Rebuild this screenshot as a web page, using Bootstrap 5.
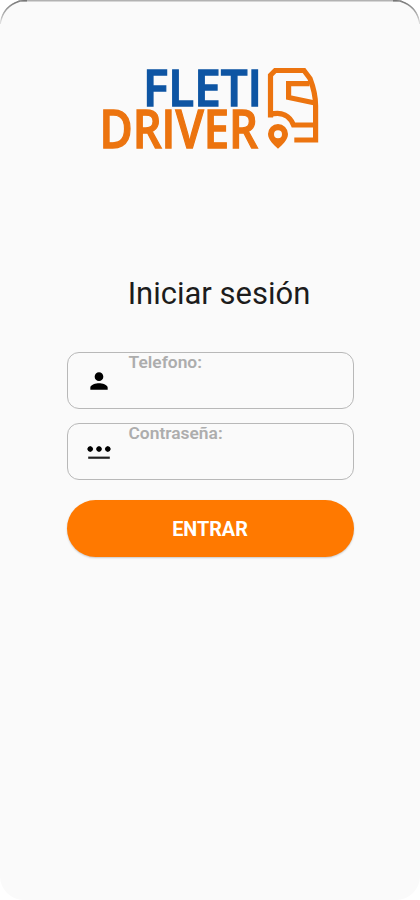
<!DOCTYPE html>
<html lang="es">
<head>
<meta charset="utf-8">
<meta name="viewport" content="width=device-width, initial-scale=1">
<title>Fleti Driver</title>
<link href="https://cdn.jsdelivr.net/npm/bootstrap@5.3.0/dist/css/bootstrap.min.css" rel="stylesheet">
<style>
body{background:#fff;font-family:Roboto,"Liberation Sans",sans-serif}
.screen{height:900px;background:#fafafa;border-radius:24px;overflow:hidden;padding-top:62px}
.edge{top:0;left:0}
.brand{font-family:"Open Sans",sans-serif;font-weight:600;overflow:visible}
.title{font-size:31px;line-height:40px;font-weight:400;color:#1c1c1c;margin:120px 0 38px;padding-left:18px}
.login-form{width:287px}
.field{height:57px;border:1.5px solid #b8b8b8;border-radius:12px;margin-bottom:14px}
.field-icon{width:61px;padding-left:2px}
.field-label{font-size:17.4px;line-height:18px;font-weight:600;color:#adadad}
.btn-enter{height:57px;margin-top:6px;padding-top:8px;background:#ff7900;color:#fff;font-size:19.8px;font-weight:700;box-shadow:0 1px 2px #0003}
.btn-enter:hover{background:#f07000;color:#fff}
</style>
<script src="https://cdn.jsdelivr.net/npm/bootstrap@5.3.0/dist/js/bootstrap.bundle.min.js"></script>
</head>
<body>
<main class="screen position-relative d-flex flex-column align-items-center">
  <svg class="edge position-absolute" width="420" height="30" aria-hidden="true">
    <defs><linearGradient id="rim" x1="0" x2="0" y1="0" y2="1"><stop stop-color="#777"/><stop offset="1" stop-color="#ddd"/></linearGradient></defs>
    <path d="M0 24Q3 6 20 1M400 1Q417 6 420 24" fill="none" stroke="url(#rim)" stroke-width="1.5"/>
    <path d="M18 .75H402" stroke="#b2b2b2" stroke-width="1.5"/>
    <path d="M18 .75H27M393 .75H402" stroke="#777" stroke-width="1.5"/>
  </svg>
  <svg class="brand flex-shrink-0" width="220" height="92" viewBox="100 62 220 92" role="img" aria-label="Fleti Driver">
    <text x="143" y="105.8" font-size="50.8" fill="#0e55a3" stroke="#0e55a3" stroke-width="1.3" textLength="119" lengthAdjust="spacingAndGlyphs">FLETI</text>
    <text x="99.4" y="147.7" font-size="51.8" fill="#ec740f" stroke="#ec740f" stroke-width="1.3" textLength="158.6" lengthAdjust="spacingAndGlyphs">DRIVER</text>
    <g fill="none" stroke="#ec740f" stroke-width="5.2">
      <path d="M270.5 117.5V75.3L275.2 70.5H304L310 78.5Q315.6 93 315.6 106V140H294.3"/>
      <path d="M309.5 83.7H288.6V97.5L315 103"/>
      <path d="M270 114.5C282 111 290 116 293.5 125H315.5"/>
    </g>
    <path fill="#ec740f" fill-rule="evenodd" d="M278 124a10 10 0 0 1 10 10c0 6-6 11-10 14.8C274 145 268 140 268 134a10 10 0 0 1 10-10Zm0 6.2a4 4 0 1 0 0 8 4 4 0 0 0 0-8Z"/>
  </svg>
  <h1 class="title">Iniciar sesión</h1>
  <form class="login-form">
    <div class="field d-flex">
      <span class="field-icon d-flex align-items-center justify-content-center">
        <svg width="26" height="26" viewBox="0 0 24 24"><path d="M12 12a4 4 0 1 0 0-8 4 4 0 0 0 0 8Zm0 2c-2.7 0-8 1.3-8 4v2h16v-2c0-2.7-5.3-4-8-4Z"/></svg>
      </span>
      <span class="field-label">Telefono:</span>
    </div>
    <div class="field d-flex">
      <span class="field-icon d-flex align-items-center justify-content-center">
        <svg width="26" height="26" viewBox="0 0 26 26"><path d="M4.2 7l2 1 1 2-1 2-2 1-2-1-1-2 1-2ZM13 7l2 1 1 2-1 2-2 1-2-1-1-2 1-2ZM21.8 7l2 1 1 2-1 2-2 1-2-1-1-2 1-2Z"/><path d="M2.2 17.6h21.6v2.2H2.2z" fill="#222"/></svg>
      </span>
      <span class="field-label">Contraseña:</span>
    </div>
    <button type="button" class="btn btn-enter rounded-pill border-0 w-100">ENTRAR</button>
  </form>
</main>
</body>
</html>
